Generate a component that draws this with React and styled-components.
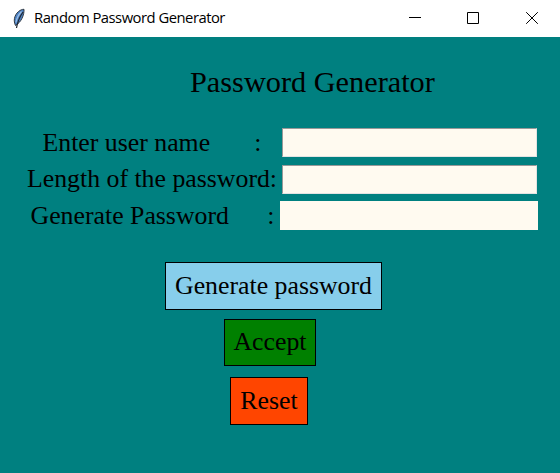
import React from "react";
import styled, { createGlobalStyle } from "styled-components";

const Global = createGlobalStyle`
  body { margin: 0; }
  * { box-sizing: border-box; }
`;
const Window = styled.main`
  width: 560px; height: 473px; display: flex; flex-direction: column;
  background: #008080; overflow: hidden; color: #000;
  font-family: "Liberation Serif", serif;
`;
const TitleBar = styled.header`
  height: 37px; flex: none; display: flex; align-items: center; background: #fff;
  padding-left: 11px;
`;
const Caption = styled.span`
  flex: 1; margin: -3px 0 0 7px; white-space: nowrap;
  font: 14.8px/20px "Open Sans", sans-serif; letter-spacing: -0.5px;
`;
const Controls = styled.div`
  display: flex; flex: none; margin-right: -1px;
`;
const Control = styled.button`
  width: 58.5px; height: 37px; padding: 0 0 1px; border: 0; background: none; flex: none;
  display: flex; align-items: center; justify-content: center;
`;
const Heading = styled.h1`
  margin: 27px 0 0 190px; font-size: 30.3px; font-weight: 400; line-height: 36px; white-space: nowrap;
`;
const Form = styled.div`
  margin: 28px 23px 0 0; display: flex; flex-direction: column; gap: 7px;
`;
const Row = styled.label`
  height: 29.5px; display: flex; align-items: center; justify-content: space-between;
  margin-right: ${(p) => (p.$flat ? -1 : 0)}px;
  padding-left: ${(p) => p.$indent}px;
`;
const Name = styled.span`
  width: ${(p) => p.$width}px; flex: none; display: flex; justify-content: space-between;
  padding-bottom: 1px;
  font-size: 25.8px; line-height: 29px; white-space: nowrap;
`;
const Entry = styled.input`
  width: ${(p) => (p.$flat ? 258 : 255)}px; height: 29px; flex: none; padding: 0 4px;
  border: ${(p) => (p.$flat ? 0 : 1)}px solid; border-color: #999 #e3e3e3 #e3e3e3 #999;
  border-radius: 0; outline: 0; background: floralwhite;
`;
const Actions = styled.div`
  display: flex; flex-direction: column; align-items: flex-start; margin-top: 31.5px;
`;
const Action = styled.button`
  width: ${(p) => p.$width}px; height: ${(p) => p.$height}px; margin: 0 0 ${(p) => p.$gap}px ${(p) => p.$indent}px; padding: 0 0 2px;
  border: 1px solid #000; background: ${(p) => p.$tone}; color: #000;
  font: 25.8px/29px "Liberation Serif", serif; white-space: nowrap;
`;

function Feather() {
  return (
    <svg width="16" height="22" viewBox="0 0 16 22">
      <path d="M4.500 17.500C2.300 13 3 7.500 7.500 3.500 9.500 2 11 1.300 13 1.300c.3 5.500-2.500 12.700-8.500 16.200z" fill="#4b82c5" stroke="#303842" strokeWidth="1" />
      <path d="M10.500 3.500C7.200 7 5.500 11 5 14.500" fill="none" stroke="#9fbfe4" strokeWidth="1.200" />
      <path d="M12 4C8.500 9 6.500 14 5.500 20" fill="none" stroke="#20252d" strokeWidth="1.200" />
    </svg>
  );
}

export default function App() {
  return (
    <Window>
      <Global />
      <TitleBar>
        <Feather />
        <Caption>Random Password Generator</Caption>
        <Controls>
          <Control aria-label="Minimize">
            <svg width="12" height="12" viewBox="0 0 12 12"><path d="M0 5.5h12" stroke="#000" /></svg>
          </Control>
          <Control aria-label="Maximize">
            <svg width="12" height="12" viewBox="0 0 12 12"><path d="M.5.5h11v11H.5z" fill="none" stroke="#000" /></svg>
          </Control>
          <Control aria-label="Close">
            <svg width="12" height="12" viewBox="0 0 12 12"><path d="M.2.2l11.600 11.600M11.800.2L.2 11.800" stroke="#000" /></svg>
          </Control>
        </Controls>
      </TitleBar>
      <Heading>Password Generator</Heading>
      <Form>
        <Row $indent={42.5}><Name $width={219}><span>Enter user name</span><span>:</span></Name><Entry /></Row>
        <Row $indent={27}><Name $width={249}>Length of the password:</Name><Entry /></Row>
        <Row $indent={30.5} $flat><Name $width={244}><span>Generate Password</span><span>:</span></Name><Entry $flat /></Row>
      </Form>
      <Actions>
        <Action $width={217} $height={48} $gap={9} $indent={165} $tone="skyblue">Generate password</Action>
        <Action $width={92} $height={47} $gap={11} $indent={224} $tone="green">Accept</Action>
        <Action $width={78} $height={48} $gap={0} $indent={230} $tone="orangered">Reset</Action>
      </Actions>
    </Window>
  );
}
